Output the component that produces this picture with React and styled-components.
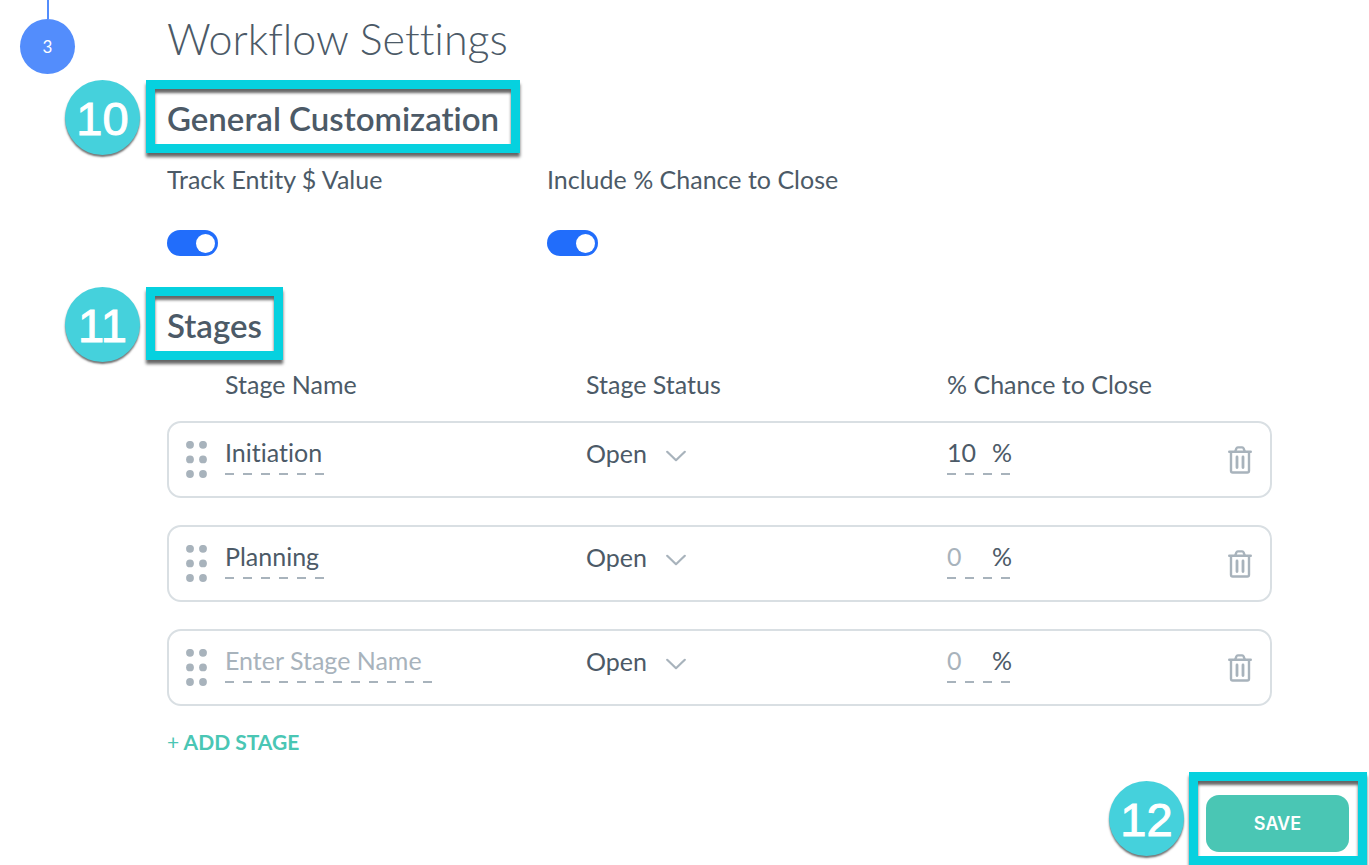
import React, { useState } from 'react';
import styled, { createGlobalStyle } from 'styled-components';

const initialStages = [
  { id: 1, name: 'Initiation', status: 'Open', chance: '10', width: 99 },
  { id: 2, name: 'Planning', status: 'Open', chance: '', width: 101 },
  { id: 3, name: '', status: 'Open', chance: '', width: 207 },
];

const DragDots = () => (
  <svg width="22" height="38" viewBox="0 0 22 38" fill="#a8b3bc" aria-hidden="true">
    {[3.8, 18.4, 33].map(y => (
      <React.Fragment key={y}>
        <circle cx="4" cy={y} r="3.9" />
        <circle cx="17" cy={y} r="3.9" />
      </React.Fragment>
    ))}
  </svg>
);

const Chevron = () => (
  <ChevronIcon width="20" height="12" viewBox="0 0 20 12" aria-hidden="true">
    <path d="M1.2 1.8 L10 10.2 L18.8 1.8" />
  </ChevronIcon>
);

const Trash = () => (
  <svg width="24" height="28" viewBox="0 0 24 28" fill="none" stroke="#a8b3bc" strokeWidth="2.4" strokeLinecap="round" strokeLinejoin="round" aria-hidden="true">
    <path d="M1.2 5.8 H22.8" />
    <path d="M7.2 5.6 L8.4 2.4 Q8.8 1.4 9.8 1.4 H14.2 Q15.2 1.4 15.6 2.4 L16.8 5.6" />
    <path d="M3 6.2 V24.8 Q3 26.5 4.7 26.5 H19.3 Q21 26.5 21 24.8 V6.2" />
    <path d="M9 11 V21.6 M15 11 V21.6" strokeWidth="2.8" />
  </svg>
);

const App = () => {
  const [stages, setStages] = useState(initialStages);
  const [trackValue, setTrackValue] = useState(true);
  const [includeChance, setIncludeChance] = useState(true);

  const update = (id, key, value) => {
    setStages(stages.map(stage => (stage.id === id ? { ...stage, [key]: value } : stage)));
  };

  const remove = id => setStages(stages.filter(stage => stage.id !== id));

  const addStage = () => {
    setStages([...stages, { id: Date.now(), name: '', status: 'Open', chance: '', width: 207 }]);
  };

  return (
    <>
      <GlobalStyle />
      <Page>
        <Rail>
          <RailLine />
          <Step>3</Step>
        </Rail>
        <Content>
          <Title>Workflow Settings</Title>
          <Callout>
            <Badge>10</Badge>
            <Heading>General Customization</Heading>
          </Callout>
          <Options>
            <Option>
              <span>Track Entity $ Value</span>
              <Toggle type="checkbox" role="switch" checked={trackValue} onChange={e => setTrackValue(e.target.checked)} />
            </Option>
            <Option>
              <span>Include % Chance to Close</span>
              <Toggle type="checkbox" role="switch" checked={includeChance} onChange={e => setIncludeChance(e.target.checked)} />
            </Option>
          </Options>
          <Callout>
            <Badge>11</Badge>
            <Heading>Stages</Heading>
          </Callout>
          <Columns>
            <span />
            <span>Stage Name</span>
            <span>Stage Status</span>
            <span>% Chance to Close</span>
          </Columns>
          <StageList>
            {stages.map(stage => (
              <StageRow key={stage.id}>
                <DragButton type="button" aria-label="Move stage"><DragDots /></DragButton>
                <Field $width={stage.width}>
                  <TextInput
                    aria-label="Stage Name"
                    placeholder="Enter Stage Name"
                    value={stage.name}
                    onChange={e => update(stage.id, 'name', e.target.value)}
                  />
                </Field>
                <Status>
                  <Select aria-label="Stage Status" value={stage.status} onChange={e => update(stage.id, 'status', e.target.value)}>
                    <option>Open</option>
                    <option>Won</option>
                    <option>Lost</option>
                  </Select>
                  <Chevron />
                </Status>
                <Field $width={65}>
                  <TextInput
                    aria-label="% Chance to Close"
                    placeholder="0"
                    value={stage.chance}
                    onChange={e => update(stage.id, 'chance', e.target.value)}
                  />
                  <span>%</span>
                </Field>
                <IconButton type="button" aria-label="Delete stage" onClick={() => remove(stage.id)}><Trash /></IconButton>
              </StageRow>
            ))}
          </StageList>
          <AddButton type="button" onClick={addStage}><Plus>+</Plus> ADD STAGE</AddButton>
        </Content>
      </Page>
      <Footer>
        <SaveCallout>
          <SaveBadge>12</SaveBadge>
          <SaveButton type="button">SAVE</SaveButton>
        </SaveCallout>
      </Footer>
    </>
  );
};

export default App;

const GlobalStyle = createGlobalStyle`
  * {
    box-sizing: border-box;
  }
  body {
    margin: 0;
    background: #fff;
    color: #4c5a67;
    font-family: Lato, "Open Sans", sans-serif;
    font-size: 25px;
    font-variant-ligatures: none;
    line-height: 32px;
  }
  button, input, select {
    margin: 0;
    padding: 0;
    border: 0;
    background: none;
    color: inherit;
    font: inherit;
    font-variant-ligatures: none;
  }
  button {
    cursor: pointer;
  }
  svg {
    display: block;
  }
`;

const Page = styled.div`
  display: flex;
  padding-right: 97px;
`;

const Rail = styled.div`
  flex: 0 0 167px;
  display: flex;
  flex-direction: column;
  align-items: flex-start;
  padding-left: 20px;
`;

const RailLine = styled.div`
  width: 2px;
  height: 19px;
  margin-left: 27px;
  background: #538dfc;
`;

const Step = styled.div`
  display: flex;
  align-items: center;
  justify-content: center;
  width: 55px;
  height: 55px;
  border-radius: 50%;
  background: #538dfc;
  color: #fff;
  font-size: 17px;
`;

const Content = styled.main`
  flex: 1;
  min-width: 0;
  padding-top: 13px;
`;

const Title = styled.h1`
  margin: 0 0 15px;
  font-size: 43px;
  font-weight: 300;
  line-height: 52px;
`;

const Callout = styled.div`
  position: relative;
  width: max-content;
  margin-left: -21px;
  padding: 0 12px;
  border: 9px solid #06d1df;
  box-shadow: 0 4px 3px rgba(0, 0, 0, 0.6), inset 0 4px 3px rgba(0, 0, 0, 0.6);
`;

const Heading = styled.h2`
  margin: 0;
  padding-top: 3px;
  font-size: 33px;
  font-weight: 600;
  line-height: 52px;
`;

const Badge = styled.span`
  position: absolute;
  top: -9px;
  left: -90px;
  width: 75px;
  height: 75px;
  border-radius: 50%;
  background: #45d1dc;
  box-shadow: 0 2px 2px rgba(0, 0, 0, 0.55);
  color: #fff;
  font-family: "Liberation Sans", sans-serif;
  font-size: 47px;
  line-height: 78px;
  text-align: center;
  -webkit-text-stroke: 1px #fff;
`;

const Options = styled.div`
  display: grid;
  grid-template-columns: 380px 1fr;
  padding: 10px 0 31px;
`;

const Option = styled.label`
  display: flex;
  flex-direction: column;
  align-items: flex-start;
  gap: 35px;
`;

const Toggle = styled.input`
  appearance: none;
  display: flex;
  align-items: center;
  width: 51px;
  height: 26px;
  margin: 0;
  padding: 0 3px;
  border-radius: 13px;
  background: #a8b3bc;
  cursor: pointer;

  &::before {
    content: '';
    width: 19px;
    height: 19px;
    border-radius: 50%;
    background: #fff;
  }
  &:checked {
    justify-content: flex-end;
    background: #216dfb;
  }
`;

const Columns = styled.div`
  display: grid;
  grid-template-columns: 56px 361fr 361fr 281fr 42px;
  padding: 8px 2px 21px;
`;

const StageList = styled.div`
  display: flex;
  flex-direction: column;
  gap: 27px;
`;

const StageRow = styled.div`
  display: grid;
  grid-template-columns: 56px 361fr 361fr 281fr 42px;
  align-items: center;
  height: 77px;
  border: 2px solid #d9dfe3;
  border-radius: 14px;
`;

const DragButton = styled.button`
  padding-left: 17px;
  cursor: grab;
`;

const Field = styled.div`
  display: flex;
  width: ${props => props.$width}px;
  margin-bottom: 9px;
  padding-bottom: 7px;
  background: repeating-linear-gradient(90deg, #a8b3bc 0 9px, transparent 9px 18px) bottom / 100% 2px no-repeat;
`;

const TextInput = styled.input`
  flex: 1;
  min-width: 0;
  height: 32px;
  outline: none;

  &::placeholder {
    color: #a8b3bc;
    opacity: 1;
  }
`;

const Status = styled.div`
  display: flex;
  align-items: center;
  gap: 19px;
  padding-bottom: 14px;
`;

const ChevronIcon = styled.svg`
  margin-top: 6px;
  fill: none;
  stroke: #a8b3bc;
  stroke-width: 2.2;
  stroke-linecap: round;
  stroke-linejoin: round;
`;

const Select = styled.select`
  appearance: none;
  field-sizing: content;
  outline: none;
`;

const IconButton = styled.button`
  width: 24px;
`;

const AddButton = styled.button`
  display: block;
  margin-top: 22px;
  color: #4ac6b4;
  font-size: 21px;
  font-weight: 700;
  line-height: 28px;
`;

const Plus = styled.span`
  font-weight: 400;
`;

const Footer = styled.footer`
  display: flex;
  justify-content: flex-end;
  padding: 16px 2px 0 0;
`;

const SaveCallout = styled(Callout)`
  margin: 0;
  padding: 14px 9px 4px 8px;
`;

const SaveBadge = styled(Badge)`
  top: 0;
  left: -89px;
`;

const SaveButton = styled.button`
  display: block;
  width: 143px;
  height: 57px;
  border-radius: 13px;
  background: #4ac6b4;
  color: #fff;
  font-family: Inter, sans-serif;
  font-size: 18px;
  font-weight: 600;
`;
